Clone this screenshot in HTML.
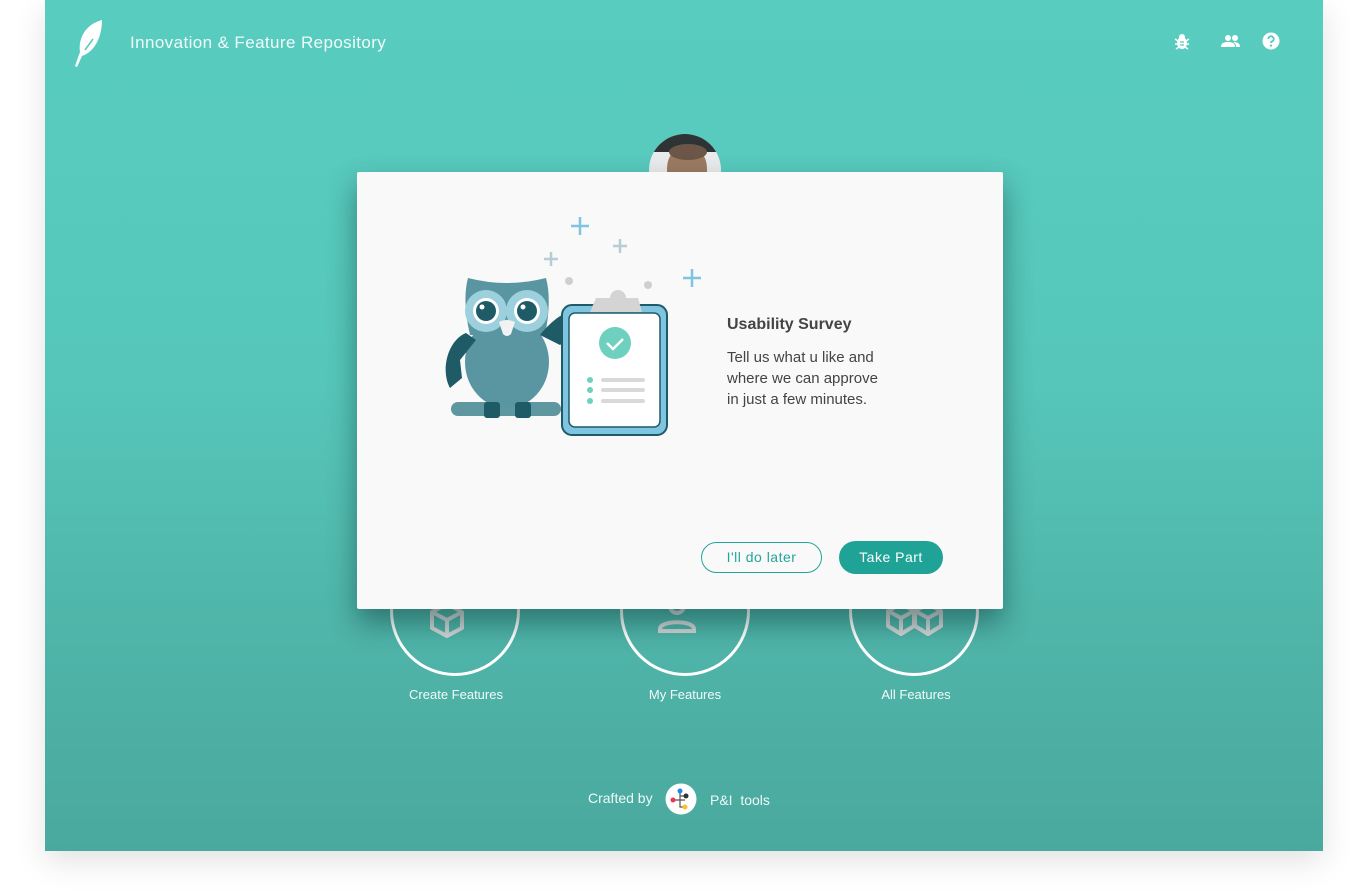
<!DOCTYPE html>
<html><head><meta charset="utf-8"><style>
*{margin:0;padding:0;box-sizing:border-box}
body{width:1370px;height:896px;background:#fff;font-family:"Liberation Sans",sans-serif;position:relative;overflow:hidden}
#app{position:absolute;left:45px;top:0;width:1278px;height:851px;background:linear-gradient(#59ccc0 0%,#56c6ba 45%,#4fb4a9 75%,#4aa99e 100%);box-shadow:0 10px 30px rgba(0,0,0,.12)}
.title{position:absolute;left:85px;top:33px;font-size:17px;letter-spacing:.4px;color:#f0fbfa}
.circ{position:absolute;width:130px;height:130px;border:3px solid #fff;border-radius:50%;top:546px}
.lbl{position:absolute;top:687px;color:#f3fbfa;font-size:13px;width:200px;text-align:center}
#modal{position:absolute;left:357px;top:172px;width:646px;height:437px;background:#f9f9f9;box-shadow:0 14px 28px rgba(0,40,40,.45);border-radius:2px}
.h{position:absolute;left:370px;top:144px;font-size:16px;font-weight:bold;color:#444}
.p{position:absolute;left:370px;top:175px;font-size:15px;line-height:21px;color:#444}
.b1{position:absolute;left:344px;top:370px;width:121px;height:31px;border:1px solid #22a699;border-radius:16px;color:#22a699;font-size:14px;text-align:center;line-height:29px;letter-spacing:.5px}
.b2{position:absolute;left:482px;top:369px;width:104px;height:33px;background:#1fa396;border-radius:17px;color:#fff;font-size:14px;text-align:center;line-height:33px;letter-spacing:.5px}
</style></head><body>
<div id="app">
<svg style="position:absolute;left:27px;top:18px" width="34" height="50" viewBox="0 0 34 50"><path d="M30 2 C14 6 6 20 8 34 L3 48 L5 49 L10 38 C22 34 30 20 30 2Z" fill="#fff"/><path d="M13 32 L21 21" stroke="#57c9bd" stroke-width="1.5"/></svg>
<div class="title">Innovation &amp; Feature Repository</div>
<svg style="position:absolute;left:1129px;top:33px" width="16" height="17" viewBox="0 0 16 17"><ellipse cx="8" cy="10" rx="5" ry="6" fill="#fff"/><circle cx="8" cy="4" r="3" fill="#fff"/><path d="M1 6l3 2M15 6l-3 2M1 11h3M15 11h-3M2 16l3-2M14 16l-3-2" stroke="#fff" stroke-width="1.5"/><path d="M6 9h4M6 12h4" stroke="#56c9bd" stroke-width="1.3"/></svg>
<svg style="position:absolute;left:1176px;top:34px" width="20" height="14" viewBox="0 0 20 14"><circle cx="7" cy="4" r="3" fill="#fff"/><circle cx="14" cy="4" r="3" fill="#fff"/><path d="M0 13c0-4 3-5 7-5s7 1 7 5z M12 8c4 0 7 1 7 5h-4c0-2-1-4-3-5z" fill="#fff"/></svg>
<svg style="position:absolute;left:1217px;top:32px" width="18" height="18" viewBox="0 0 18 18"><circle cx="9" cy="9" r="8.5" fill="#fff"/><path d="M6.3 7a2.7 2.7 0 1 1 3.7 2.5c-.7.3-1 .8-1 1.5" stroke="#56c9bd" stroke-width="1.8" fill="none"/><circle cx="9" cy="13.6" r="1.1" fill="#56c9bd"/></svg>
<div style="position:absolute;left:604px;top:134px;width:72px;height:72px;border-radius:50%;background:#e9ebec;overflow:hidden">
<div style="position:absolute;left:0;top:0;width:72px;height:18px;background:#2e3436"></div>
<div style="position:absolute;left:18px;top:12px;width:40px;height:50px;border-radius:45%;background:#9c7a62"></div>
<div style="position:absolute;left:20px;top:10px;width:38px;height:16px;border-radius:50%;background:#6b5648"></div>
</div>
<div class="circ" style="left:345px"></div>
<div class="circ" style="left:575px"></div>
<div class="circ" style="left:804px"></div>
<svg style="position:absolute;left:384px;top:600px" width="36" height="40" viewBox="0 0 36 40"><path d="M18 4 L33 12 L33 28 L18 36 L3 28 L3 12Z M3 12 L18 20 L33 12 M18 20 V36" fill="none" stroke="#d3d6d6" stroke-width="4" stroke-linejoin="round"/></svg>
<svg style="position:absolute;left:612px;top:596px" width="40" height="40" viewBox="0 0 40 40"><circle cx="20" cy="10" r="7" fill="none" stroke="#d3d6d6" stroke-width="4"/><path d="M3 33 C3 24 37 24 37 33 V35 H3Z" fill="none" stroke="#d3d6d6" stroke-width="4"/></svg>
<svg style="position:absolute;left:840px;top:600px" width="60" height="40" viewBox="0 0 60 40"><g fill="none" stroke="#d3d6d6" stroke-width="4" stroke-linejoin="round"><path d="M16 4 L29 11 L29 26 L16 34 L3 26 L3 11Z M3 11 L16 18 L29 11 M16 18 V34"/><path d="M43 4 L56 11 L56 26 L43 34 L30 26 L30 11Z M30 11 L43 18 L56 11 M43 18 V34"/></g></svg>
<div class="lbl" style="left:311px">Create Features</div>
<div class="lbl" style="left:540px">My Features</div>
<div class="lbl" style="left:771px">All Features</div>
<div style="position:absolute;left:543px;top:790px;color:#f0faf9;font-size:14px">Crafted by</div>
<svg style="position:absolute;left:620px;top:783px" width="32" height="32" viewBox="0 0 32 32"><circle cx="16" cy="16" r="15.5" fill="#fff"/><path d="M15 8v16h4M8 17h12M15 13h6" stroke="#555" stroke-width="1.2" fill="none"/><circle cx="15" cy="8" r="2.5" fill="#1e88e5"/><circle cx="8" cy="17" r="2.5" fill="#e53950"/><circle cx="21" cy="13" r="2.5" fill="#333"/><circle cx="20" cy="24" r="2.5" fill="#fbc02d"/></svg>
<div style="position:absolute;left:665px;top:792px;color:#f0faf9;font-size:14px">P&amp;I&nbsp; tools</div>
</div>
<div id="modal">
<svg style="position:absolute;left:73px;top:40px" width="280" height="230" viewBox="430 212 280 230">
<path d="M580 217v18M571 226h18M692 269v18M683 278h18" stroke="#7fc4e0" stroke-width="2.5"/>
<path d="M620 239v14M613 246h14M551 252v14M544 259h14" stroke="#b8ccd6" stroke-width="2.5"/>
<circle cx="569" cy="281" r="4" fill="#cfcfcf"/><circle cx="648" cy="285" r="4" fill="#cfcfcf"/>
<rect x="451" y="402" width="110" height="14" rx="7" fill="#5f97a0"/>
<ellipse cx="507" cy="362" rx="42" ry="46" fill="#5a96a2"/>
<path d="M468 278 Q507 288 546 278 Q552 300 545 335 L470 335 Q462 300 468 278Z" fill="#5a96a2"/>
<circle cx="486" cy="311" r="21" fill="#9bd0dc"/><circle cx="527" cy="311" r="21" fill="#9bd0dc"/>
<circle cx="486" cy="311" r="13" fill="#fff"/><circle cx="527" cy="311" r="13" fill="#fff"/>
<circle cx="486" cy="311" r="10" fill="#1f5b67"/><circle cx="527" cy="311" r="10" fill="#1f5b67"/>
<circle cx="482" cy="307" r="2.5" fill="#fff"/><circle cx="523" cy="307" r="2.5" fill="#fff"/>
<path d="M499 322 Q507 318 515 322 L511 334 Q507 338 503 334Z" fill="#f2f2f2"/>
<path d="M466 333 C448 340 440 370 450 388 L462 378 L460 360 L476 340Z" fill="#1f5b67"/>
<path d="M540 335 C560 310 580 305 592 310 L575 325 L580 330 L560 345Z" fill="#1f5b67"/>
<rect x="484" y="402" width="16" height="16" rx="3" fill="#1f5b67"/><rect x="515" y="402" width="16" height="16" rx="3" fill="#1f5b67"/>
<rect x="562" y="305" width="105" height="130" rx="10" fill="#7fc4e0" stroke="#1f5b67" stroke-width="2"/>
<rect x="569" y="313" width="91" height="114" rx="6" fill="#fff" stroke="#1f5b67" stroke-width="1.5"/>
<path d="M590 312 L596 298 L610 298 A8 8 0 0 1 626 298 L638 298 L642 312Z" fill="#d4d4d4"/>
<circle cx="615" cy="343" r="16" fill="#6ed0bf"/><path d="M607 343l6 6 10-10" stroke="#fff" stroke-width="2.5" fill="none"/>
<g fill="#6ed0bf"><circle cx="590" cy="380" r="3"/><circle cx="590" cy="390" r="3"/><circle cx="590" cy="401" r="3"/></g>
<g stroke="#d9d9d9" stroke-width="4" stroke-linecap="round"><path d="M603 380h40M603 390h40M603 401h40"/></g>
</svg>
<div class="h">Usability Survey</div>
<div class="p">Tell us what u like and<br>where we can approve<br>in just a few minutes.</div>
<div class="b1">I'll do later</div>
<div class="b2">Take Part</div>
</div>
</body></html>
